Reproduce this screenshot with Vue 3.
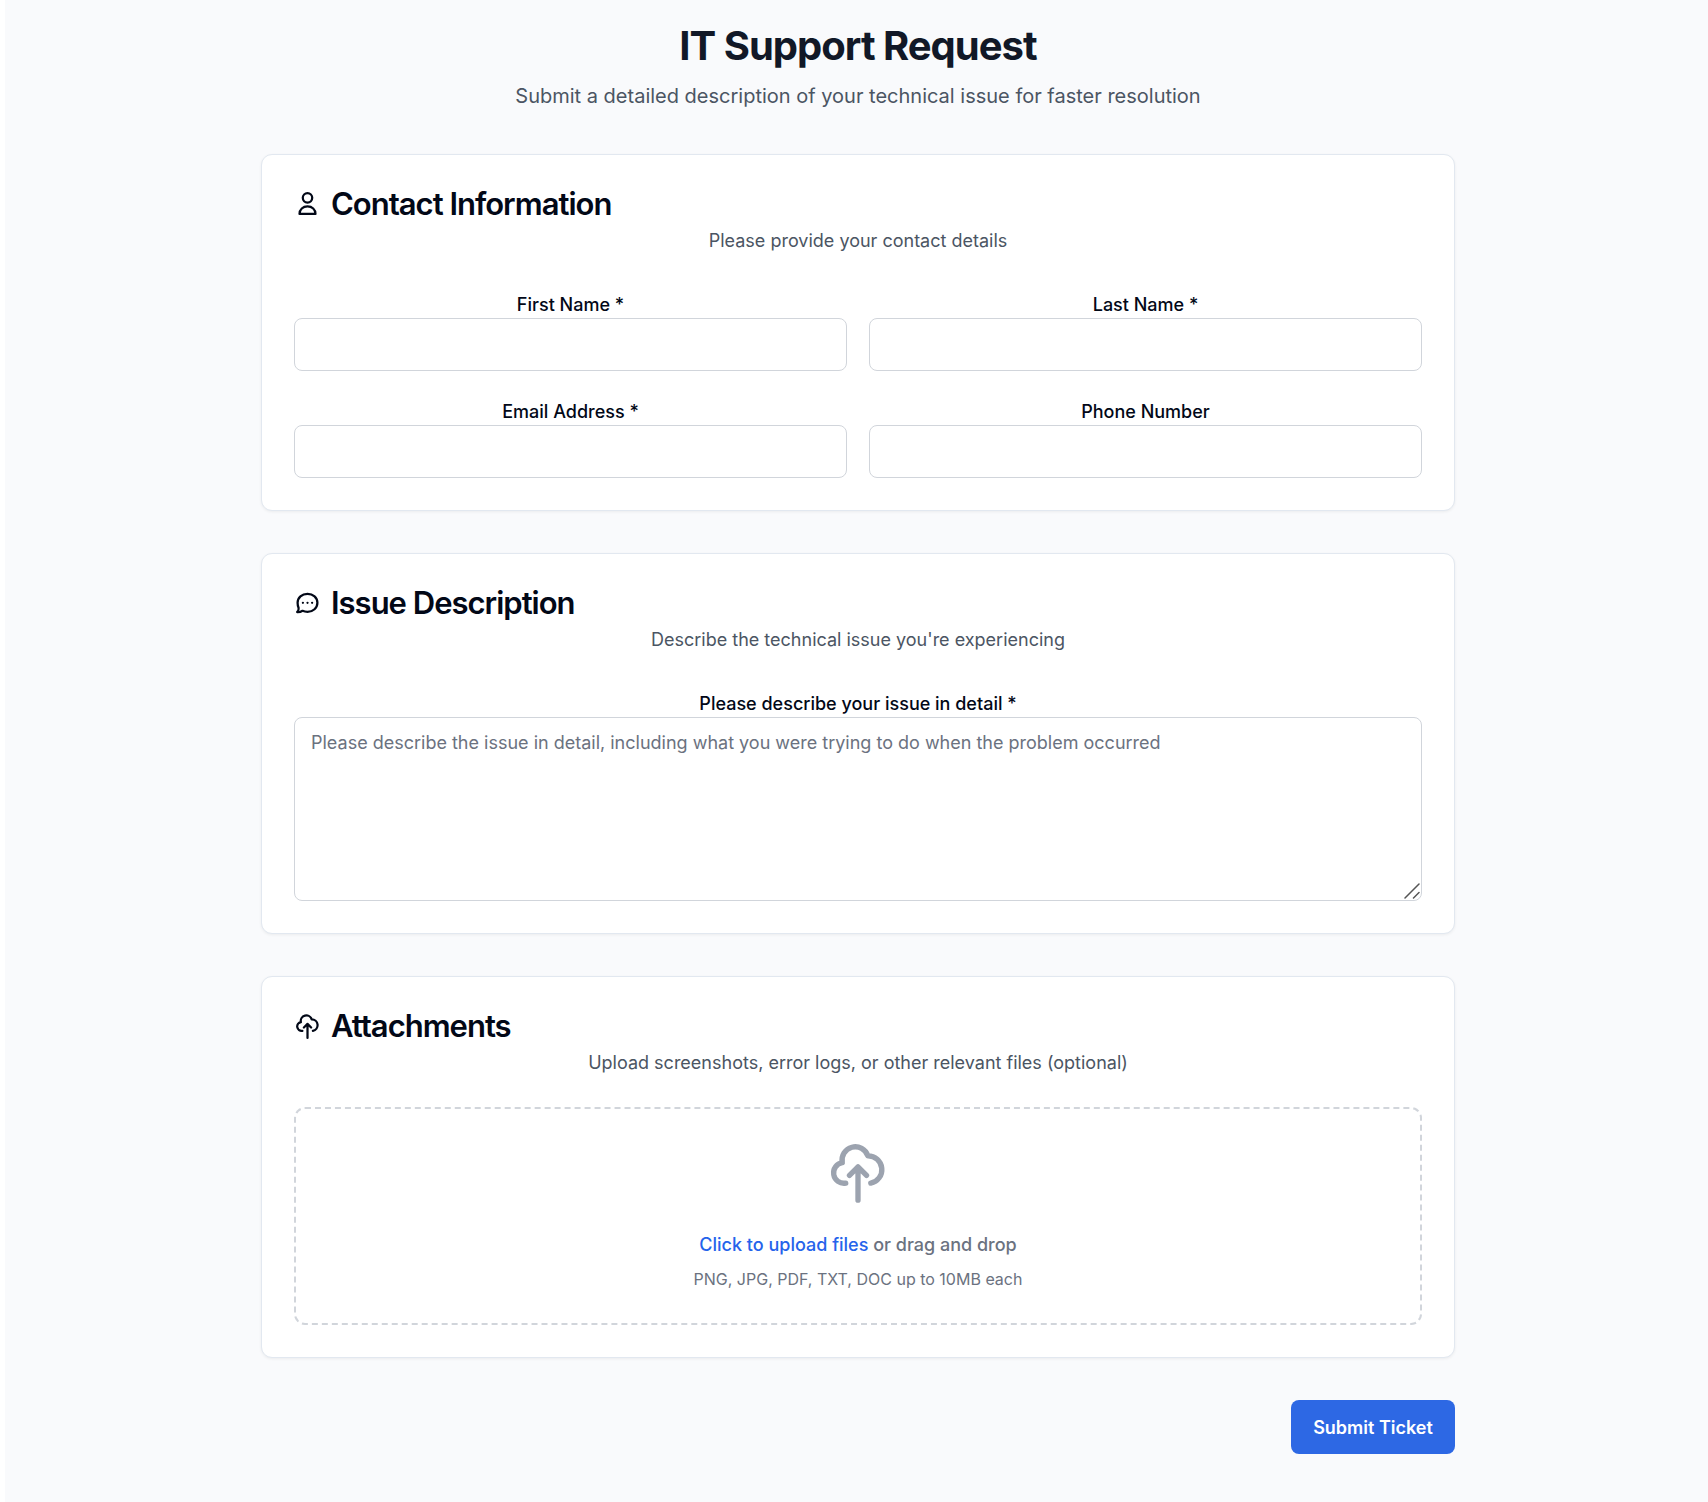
<script setup>
import { ref } from 'vue'

const contactFields = [
  { id: 'first-name', label: 'First Name *', type: 'text' },
  { id: 'last-name', label: 'Last Name *', type: 'text' },
  { id: 'email', label: 'Email Address *', type: 'email' },
  { id: 'phone', label: 'Phone Number', type: 'tel' },
]
const cloudPath =
  'M7.4 15.8A3.9 3.9 0 0 1 6.1 8.1 4.970 4.970 0 0 1 15.700 5.600 5.150 5.150 0 0 1 16.800 15.800M12 22.200V9.700M8.800 12.900 12 9.700l3.200 3.200'
const values = ref({})
const issue = ref('')
const fileInput = ref(null)
</script>

<template>
  <main class="page">
    <header class="intro">
      <h1>IT Support Request</h1>
      <p>Submit a detailed description of your technical issue for faster resolution</p>
    </header>

    <form class="form" @submit.prevent>
      <section class="card">
        <h2>
          <svg class="icon" viewBox="0 0 24 24" aria-hidden="true">
            <circle cx="12" cy="6.1" r="4.2" />
            <path d="M4.900 20.400c0-4 3-6.700 7.100-6.700s7.100 2.700 7.100 6.700z" />
          </svg>
          Contact Information
        </h2>
        <p class="hint">Please provide your contact details</p>
        <div class="grid">
          <div v-for="field in contactFields" :key="field.id" class="field">
            <label :for="field.id">{{ field.label }}</label>
            <input :id="field.id" v-model="values[field.id]" class="box" :type="field.type" />
          </div>
        </div>
      </section>

      <section class="card">
        <h2>
          <svg class="icon" viewBox="0 0 24 24" aria-hidden="true">
            <path d="M12 3.400c5 0 8.800 3.500 8.800 8s-3.800 8-8.800 8c-1.600 0-3.100-.3-4.400-.9-1.400.9-3 1.300-4.800 1.200 1-1 1.500-2.300 1.300-3.700-.6-1.300-.9-2.900-.9-4.600 0-4.500 3.800-8 8.800-8z" />
            <path d="M7.900 11.400h.01M12 11.400h.01M16.100 11.400h.01" />
          </svg>
          Issue Description
        </h2>
        <p class="hint">Describe the technical issue you're experiencing</p>
        <div class="field">
          <label for="issue">Please describe your issue in detail *</label>
          <div class="area">
            <textarea
              id="issue"
              v-model="issue"
              class="box"
              placeholder="Please describe the issue in detail, including what you were trying to do when the problem occurred"
            ></textarea>
            <svg class="grip" viewBox="0 0 16 16" aria-hidden="true">
              <path d="M1 15 15 1M9.500 15 15 9.500" />
            </svg>
          </div>
        </div>
      </section>

      <section class="card">
        <h2>
          <svg class="icon" viewBox="0 0 24 24" aria-hidden="true">
            <path :d="cloudPath" />
          </svg>
          Attachments
        </h2>
        <p class="hint">Upload screenshots, error logs, or other relevant files (optional)</p>
        <div class="dropzone">
          <svg class="cloud" viewBox="0 0 24 24" aria-hidden="true">
            <path :d="cloudPath" />
          </svg>
          <p class="prompt">
            <button type="button" class="pick" @click="fileInput.click()">Click to upload files</button>
            or drag and drop
          </p>
          <p class="formats">PNG, JPG, PDF, TXT, DOC up to 10MB each</p>
          <input ref="fileInput" type="file" multiple hidden aria-label="Upload files" />
        </div>
      </section>

      <button type="submit" class="submit">Submit Ticket</button>
    </form>
  </main>
</template>

<style>
body {
  background: #fff;
}
</style>

<style scoped>
* {
  box-sizing: border-box;
}

.page {
  min-height: 100vh;
  margin-left: 5px;
  padding: 22px 24px 48px 27px;
  background: #f9fafc;
  color: #020817;
  font-family: Inter, "Liberation Sans", sans-serif;
  font-size: 18px;
  text-align: center;
}

h1,
h2,
p {
  margin: 0;
}

.intro {
  margin-bottom: 42px;
}

h1 {
  color: #111827;
  font-size: 40px;
  font-weight: 700;
  line-height: 48px;
  letter-spacing: -1px;
}

.intro p {
  margin-top: 10px;
  color: #4b5563;
  font-size: 20px;
  line-height: 32px;
}

.form {
  display: flex;
  flex-direction: column;
  gap: 42px;
  max-width: 1194px;
  margin: 0 auto;
}

.card {
  padding: 32px;
  background: #fff;
  border: 1px solid #e2e8f0;
  border-radius: 11px;
  box-shadow: 0 1px 3px rgba(0, 0, 0, 0.06);
}

h2 {
  display: flex;
  align-items: center;
  gap: 10px;
  font-size: 31px;
  font-weight: 600;
  line-height: 34px;
  letter-spacing: -1px;
}

.icon {
  width: 27px;
  height: 27px;
}

.icon,
.cloud,
.grip {
  flex: none;
  fill: none;
  stroke: currentColor;
  stroke-width: 2;
  stroke-linecap: round;
  stroke-linejoin: round;
}

.hint {
  margin: 6px 0 31px;
  color: #4b5563;
  line-height: 27px;
}

.grid {
  display: grid;
  grid-template-columns: 1fr 1fr;
  gap: 21px 22px;
}

.field {
  display: flex;
  flex-direction: column;
}

label {
  padding-top: 6px;
  font-weight: 500;
  line-height: 27px;
}

.box {
  display: block;
  width: 100%;
  height: 53px;
  padding: 0 16px;
  background: #fff;
  border: 1px solid #d1d5db;
  border-radius: 8px;
  color: inherit;
  font: inherit;
}

.area {
  position: relative;
}

textarea.box {
  height: 184px;
  padding: 11px 16px;
  line-height: 27px;
  resize: vertical;
}

textarea::placeholder {
  color: #6b7280;
  opacity: 1;
}

textarea::-webkit-resizer {
  display: none;
}

.grip {
  position: absolute;
  right: 2px;
  bottom: 2px;
  width: 16px;
  height: 16px;
  color: #555;
  stroke-width: 1.5;
  pointer-events: none;
}

.dropzone {
  display: flex;
  flex-direction: column;
  align-items: center;
  padding: 32px;
  border: 2px dashed #d1d5db;
  border-radius: 11px;
  color: #6b7280;
}

.cloud {
  width: 64px;
  height: 64px;
  color: #9ca3af;
}

.prompt {
  margin-top: 26px;
  font-weight: 500;
  line-height: 27px;
}

.pick {
  padding: 0;
  background: none;
  border: 0;
  color: #2563eb;
  font: inherit;
  cursor: pointer;
}

.formats {
  margin-top: 10px;
  font-size: 16px;
  line-height: 23px;
}

.submit {
  align-self: flex-end;
  min-width: 164px;
  height: 54px;
  padding: 0 21px;
  background: #2d68e4;
  border: 0;
  border-radius: 8px;
  color: #fff;
  font: inherit;
  font-weight: 600;
  cursor: pointer;
}
</style>
